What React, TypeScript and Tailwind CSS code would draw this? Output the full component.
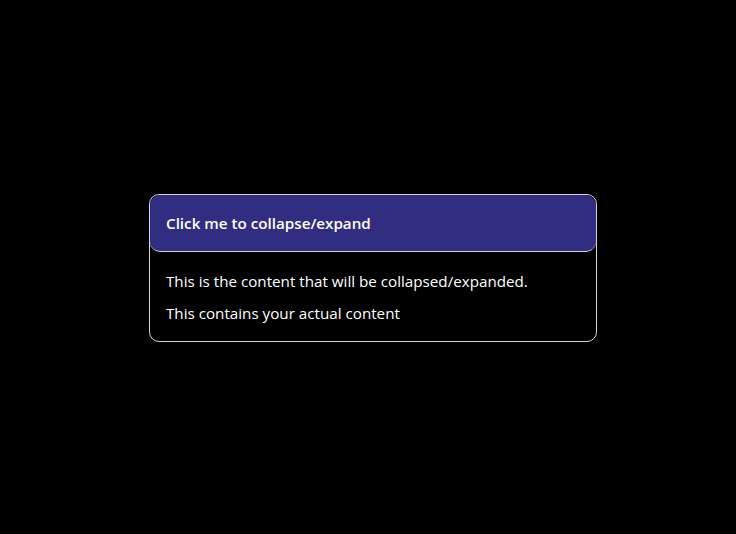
import { useState } from 'react';

export default function App() {
  const [open, setOpen] = useState(true);

  return (
    <div
      className="flex items-center justify-center min-h-screen h-[534px] bg-black pl-[10px] pt-[2px]"
      style={{ fontFamily: '"Open Sans", "Noto Sans", sans-serif' }}
    >
      <div className="w-[448px] border border-[#d4d4d8] rounded-[10px] overflow-hidden">
        <button
          onClick={() => setOpen(!open)}
          className="w-full text-left bg-[#312e81] border-b border-[#d4d4d8] rounded-[10px] px-4 pt-[2px] h-[57px] text-[15.2px] font-semibold text-white"
        >
          Click me to collapse/expand
        </button>
        {open && (
          <div className="px-4 pt-[18px] pb-[17px] text-[15.2px] text-white flex flex-col gap-[9px]">
            <p>This is the content that will be collapsed/expanded.</p>
            <p>This contains your actual content</p>
          </div>
        )}
      </div>
    </div>
  );
}
